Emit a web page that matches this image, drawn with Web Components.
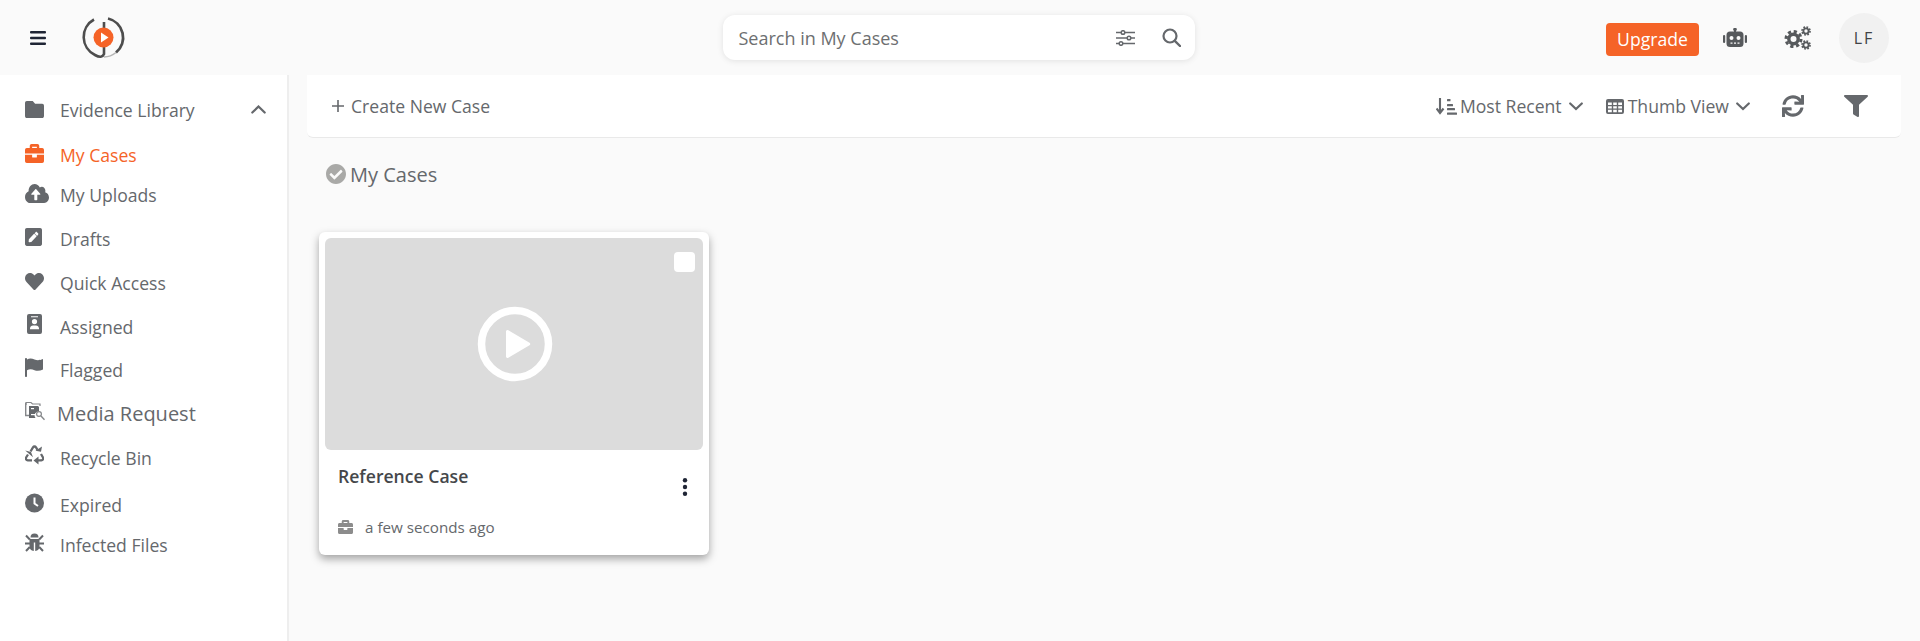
<!DOCTYPE html>
<html lang="en">
<head>
<meta charset="utf-8">
<title>My Cases</title>
<style>
  html, body { margin: 0; height: 100%; overflow: hidden; background: #fafafa; }
  body { font-family: "Open Sans", "Liberation Sans", sans-serif; font-size: 17.6px; color: #65686c; }
</style>
</head>
<body>
<app-shell>
  <top-bar slot="top"></top-bar>
  <side-nav slot="side">
    <nav-item icon="folder" w="19" h="17" step="45" top="1" chevron>Evidence Library</nav-item>
    <nav-item icon="briefcase" w="19" h="19" step="40" active>My Cases</nav-item>
    <nav-item icon="upload" w="24" h="19" step="44">My Uploads</nav-item>
    <nav-item icon="edit" w="17" h="18" step="44">Drafts</nav-item>
    <nav-item icon="heart" w="19" h="17" step="44">Quick Access</nav-item>
    <nav-item icon="contact" w="19" h="20" step="43" top="-2">Assigned</nav-item>
    <nav-item icon="flag" w="18" h="19" step="44" top="-1">Flagged</nav-item>
    <nav-item icon="media" w="20" h="20" step="44" top="-2" big>Media Request</nav-item>
    <nav-item icon="recycle" w="19" h="20" step="47" top="-2">Recycle Bin</nav-item>
    <nav-item icon="clock" w="19" h="20" step="40" top="-1">Expired</nav-item>
    <nav-item icon="bug" w="19" h="19" step="40" top="-1">Infected Files</nav-item>
  </side-nav>
  <case-toolbar></case-toolbar>
  <section-title>My Cases</section-title>
  <case-card name="Reference Case" time="a few seconds ago"></case-card>
</app-shell>

<script>
const ICONS = {
  bars: ['0 0 16 14', '<rect y="0" width="16" height="2.4" rx="1"/><rect y="5.8" width="16" height="2.4" rx="1"/><rect y="11.6" width="16" height="2.4" rx="1"/>'],
  folder: ['0 64 512 384', '<path d="M464 128H272l-64-64H48C21.49 64 0 85.49 0 112v288c0 26.51 21.49 48 48 48h416c26.51 0 48-21.49 48-48V176c0-26.51-21.49-48-48-48z"/>'],
  briefcase: ['0 32 512 448', '<path d="M320 336c0 8.84-7.16 16-16 16h-96c-8.84 0-16-7.16-16-16v-48H0v144c0 25.6 22.4 48 48 48h416c25.6 0 48-22.4 48-48V288H320v48zm144-208h-80V80c0-25.6-22.4-48-48-48H176c-25.6 0-48 22.4-48 48v48H48c-25.6 0-48 22.4-48 48v80h512v-80c0-25.6-22.4-48-48-48zm-144 0H192V96h128v32z"/>'],
  upload: ['0 32 640 448', '<path d="M537.6 226.6c4.1-10.7 6.4-22.4 6.4-34.6 0-53-43-96-96-96-19.7 0-38.1 6-53.3 16.2C367 64.2 315.3 32 256 32c-88.4 0-160 71.6-160 160 0 2.7.1 5.4.2 8.1C40.2 219.8 0 273.2 0 336c0 79.5 64.5 144 144 144h368c70.7 0 128-57.3 128-128 0-61.9-44-113.6-102.4-125.4zM393.4 288H328v112c0 8.8-7.2 16-16 16h-48c-8.8 0-16-7.2-16-16V288h-65.4c-14.3 0-21.4-17.2-11.3-27.3l105.4-105.4c6.2-6.2 16.4-6.2 22.6 0l105.4 105.4c10.1 10.1 2.9 27.3-11.3 27.3z"/>'],
  edit: ['0 32 448 448', '<path d="M400 480H48c-26.5 0-48-21.5-48-48V80c0-26.5 21.5-48 48-48h352c26.5 0 48 21.5 48 48v352c0 26.5-21.5 48-48 48zM238.1 177.9L102.4 313.6l-6.3 57.1c-.8 7.6 5.6 14.1 13.3 13.3l57.1-6.3L302.2 242c2.3-2.3 2.3-6.1 0-8.5L246.7 178c-2.5-2.4-6.3-2.4-8.6-.1zM345 165.1L314.9 135c-9.4-9.4-24.6-9.4-33.9 0l-23.1 23.1c-2.3 2.3-2.3 6.1 0 8.5l55.5 55.5c2.3 2.3 6.1 2.3 8.5 0L345 199c9.3-9.3 9.3-24.5 0-33.9z"/>'],
  heart: ['0 32 512 448', '<path d="M462.3 62.6C407.5 15.9 326 24.3 275.7 76.2L256 96.5l-19.7-20.3C186.1 24.3 104.5 15.9 49.7 62.6c-62.8 53.6-66.1 149.8-9.9 207.9l193.5 199.8c12.5 12.9 32.8 12.9 45.3 0l193.5-199.8c56.3-58.1 53-154.3-9.8-207.9z"/>'],
  contact: ['0 0 19 20', '<path fill-rule="evenodd" d="M4 0h11a2 2 0 0 1 2 2v16a2 2 0 0 1-2 2H4a2 2 0 0 1-2-2V2a2 2 0 0 1 2-2zm5.500 5a2.600 2.600 0 1 0 0 5.200a2.600 2.600 0 0 0 0-5.200zM5 14.600c0-1.800 1.500-3 3-3h3c1.500 0 3 1.200 3 3v.7H5zM6 2.200v1h7v-1z"/>'],
  flag: ['0 0 18 19', '<rect x="0" y="0" width="2" height="19" rx=".8"/><path d="M2 1.500c2.500-1.400 5-1 7.500 0s5 1 8.500-.5v10.500c-3 1.500-6 1.700-8.500.7s-5-1.200-7.500 0z"/>'],
  media: ['0 0 20 20', '<path d="M1 4V1.500h5l1.500 1.500H15v2" fill="none" stroke="#85878a" stroke-width="1.200"/><path d="M.7 2v12.500H4" fill="none" stroke="#85878a" stroke-width="1.400"/><path d="M4 5h9l1 1v4.500a4 4 0 0 0-3.500 6.500H4z"/><rect x="6" y="7" width="3" height="1.200" fill="#fff"/><rect x="6" y="13" width="4" height="1.200" fill="#fff"/><circle cx="14" cy="13" r="2.400" fill="none" stroke="#85878a" stroke-width="1.200"/><path d="M16 15l3.500 3.800" stroke="#85878a" stroke-width="1.400"/>'],
  recycle: ['0 0 19 20', '<g fill="none" stroke="currentColor" stroke-width="2.300"><path d="M5.500 6.500L8 2.300c.7-1.100 2.300-1.100 3 0l1.500 2.500"/><path d="M16 9l2 3.500c.7 1.300-.2 2.800-1.600 2.800H13"/><path d="M7 15.300H2.700c-1.400 0-2.300-1.500-1.600-2.800L3 9.500"/></g><path d="M10.500 5.800l5.500.9 1-5.200zM.2 5.500l5.800 1.600L8 12.200zM13.500 11.500v8l-5-4z"/>'],
  clock: ['0 0 19 20', '<circle cx="9.500" cy="10" r="9.500"/><path d="M9.500 4.500V10.500L13 13" fill="none" stroke="#fff" stroke-width="2"/>'],
  bug: ['0 0 19 19', '<path d="M5.500 4.500a4 4 0 0 1 8 0z"/><path d="M4.500 6h10v7a5 5 0 0 1-4.300 5V9.500H8.800V18a5 5 0 0 1-4.300-5z"/><path d="M1 2.500l3.800 4M18 2.500l-3.800 4M0 10.500h5M14 10.500h5M1 18l3.800-4M18 18l-3.800-4" stroke="currentColor" stroke-width="2" fill="none"/>'],
  check: ['8 8 496 496', '<path d="M504 256c0 136.967-111.033 248-248 248S8 392.967 8 256 119.033 8 256 8s248 111.033 248 248zM227.314 387.314l184-184c6.248-6.248 6.248-16.379 0-22.627l-22.627-22.627c-6.248-6.249-16.379-6.25-22.628 0L216 308.118l-70.059-70.059c-6.248-6.248-16.379-6.248-22.628 0l-22.627 22.627c-6.248 6.248-6.248 16.379 0 22.627l104 104c6.249 6.249 16.379 6.249 22.628.001z"/>'],
  sliders: ['0 0 19 16', '<g fill="none" stroke="currentColor" stroke-width="1.500"><path d="M0 2.500h5M9 2.500h10M0 8h11M15 8h4M0 13.500h3M7 13.500h12"/><circle cx="7" cy="2.500" r="1.800"/><circle cx="13" cy="8" r="1.800"/><circle cx="5" cy="13.500" r="1.800"/></g>'],
  search: ['0 0 19 19', '<circle cx="8" cy="8" r="6.500" fill="none" stroke="currentColor" stroke-width="2.200"/><path d="M12.800 12.800L18 18" stroke="currentColor" stroke-width="2.400" stroke-linecap="round"/>'],
  robot: ['0 0 24 19', '<rect x="11" y="0" width="2" height="4"/><circle cx="12" cy="1.500" r="1.800"/><path fill-rule="evenodd" d="M7 3.500h10a3.500 3.500 0 0 1 3.500 3.500v8.500a3.500 3.500 0 0 1-3.500 3.500H7a3.500 3.500 0 0 1-3.500-3.500V7A3.500 3.500 0 0 1 7 3.500zM8.500 8a2 2 0 1 0 0 4 2 2 0 0 0 0-4zm7 0a2 2 0 1 0 0 4 2 2 0 0 0 0-4zM7.500 14.500v1.200h2v-1.200zm3.500 0v1.200h2v-1.200zm3.500 0v1.200h2v-1.200z"/><rect x="0" y="7" width="2.200" height="8" rx="1.100"/><rect x="21.800" y="7" width="2.200" height="8" rx="1.100"/>'],
  cogs: ['0 0 27 24', '<g fill="none" stroke="currentColor"><circle cx="9.500" cy="13" r="4.700" stroke-width="3.400"/><circle cx="9.500" cy="13" r="7.500" stroke-width="3" stroke-dasharray="3.200 2.690"/><circle cx="22" cy="5" r="2.600" stroke-width="1.800"/><circle cx="22" cy="5" r="4" stroke-width="1.700" stroke-dasharray="1.700 1.440"/><circle cx="22" cy="19" r="2.600" stroke-width="1.800"/><circle cx="22" cy="19" r="4" stroke-width="1.700" stroke-dasharray="1.700 1.440"/></g>'],
  sort: ['0 0 21 17', '<path d="M4 0v14M.5 10.500L4 15l3.500-4.500" fill="none" stroke="currentColor" stroke-width="2.100"/><rect x="11" y="1" width="3.500" height="2.200" rx=".5"/><rect x="11" y="6" width="6" height="2.200" rx=".5"/><rect x="11" y="10" width="8" height="2.200" rx=".5"/><rect x="11" y="14.500" width="10" height="2.200" rx=".5"/>'],
  table: ['0 0 18 15', '<path fill-rule="evenodd" d="M2 0h14a2 2 0 0 1 2 2v11a2 2 0 0 1-2 2H2a2 2 0 0 1-2-2V2a2 2 0 0 1 2-2zm0 3.500v2.500h3.800V3.500zm5.200 0v2.500h3.600V3.500zm5 0v2.500H16V3.500zM2 7.200v2.400h3.800V7.200zm5.200 0v2.400h3.600V7.200zm5 0v2.400H16V7.200zM2 10.800v2.400h3.800v-2.400zm5.200 0v2.400h3.600v-2.400zm5 0v2.400H16v-2.400z"/>'],
  sync: ['0 0 512 512', '<path d="M440.65 12.57l4 82.77A247.16 247.16 0 0 0 255.83 8C134.73 8 33.91 94.92 12.29 209.82A12 12 0 0 0 24.09 224h49.05a12 12 0 0 0 11.67-9.26 175.91 175.91 0 0 1 317-56.94l-101.46-4.86a12 12 0 0 0-12.57 12v47.41a12 12 0 0 0 12 12H500a12 12 0 0 0 12-12V12a12 12 0 0 0-12-12h-47.37a12 12 0 0 0-11.98 12.57zM255.83 432a175.61 175.61 0 0 1-146-77.8l101.8 4.87a12 12 0 0 0 12.57-12v-47.4a12 12 0 0 0-12-12H12a12 12 0 0 0-12 12V500a12 12 0 0 0 12 12h47.35a12 12 0 0 0 12-12.6l-4.15-82.57A247.17 247.17 0 0 0 255.83 504c121.11 0 221.93-86.92 243.55-201.82a12 12 0 0 0-11.8-14.18h-49.05a12 12 0 0 0-11.67 9.26A175.86 175.86 0 0 1 255.83 432z"/>'],
  filter: ['0 0 512 512', '<path d="M487.976 0H24.028C2.71 0-8.047 25.866 7.058 40.971L192 225.941V432c0 7.831 3.821 15.17 10.237 19.662l80 55.98C298.02 518.69 320 507.493 320 487.98V225.941l184.947-184.97C520.021 25.896 509.338 0 487.976 0z"/>'],
  chevron: ['0 0 14 9', '<path d="M1.200 1.500L7 7l5.800-5.500" fill="none" stroke="currentColor" stroke-width="2.200" stroke-linecap="round"/>'],
  chevronUp: ['0 0 15 9', '<path d="M1.300 7.500L7.500 1.500l6.200 6" fill="none" stroke="currentColor" stroke-width="2.200" stroke-linecap="round"/>'],
  plus: ['0 0 12 12', '<path d="M6 0v12M0 6h12" stroke="currentColor" stroke-width="1.600" fill="none"/>'],
  kebab: ['0 0 6 18', '<circle cx="3" cy="2.200" r="2.200"/><circle cx="3" cy="9" r="2.200"/><circle cx="3" cy="15.800" r="2.200"/>']
}

customElements.define('x-icon',
  class extends HTMLElement {
    connectedCallback() {
      const [viewBox, body] = ICONS[this.getAttribute('name')]
      const w = this.getAttribute('w')
      const h = this.getAttribute('h')
      this.attachShadow({ mode: 'open' }).innerHTML = `
        <style>
          :host { display: inline-flex; flex: none; width: ${w}px; height: ${h}px; }
          svg { display: block; width: 100%; height: 100%; fill: currentColor; }
        </style>
        <svg viewBox="${viewBox}" preserveAspectRatio="none">${body}</svg>
      `
    }
  }
)

const shellTemplate = document.createElement('template')
shellTemplate.innerHTML = `
  <style>
    :host {
      display: grid;
      grid-template-columns: 289px 1fr;
      grid-template-rows: 75px 1fr;
      height: 641px;
      width: 1920px;
    }
    .top { grid-column: 1 / -1; }
    main { padding: 0 19px 0 18px; display: flex; flex-direction: column; }
  </style>
  <div class="top"><slot name="top"></slot></div>
  <slot name="side"></slot>
  <main><slot></slot></main>
`
customElements.define('app-shell',
  class extends HTMLElement {
    constructor() {
      super()
      this.attachShadow({ mode: 'open' })
      this.shadowRoot.appendChild(shellTemplate.content.cloneNode(true))
    }
  }
)

const searchTemplate = document.createElement('template')
searchTemplate.innerHTML = `
  <style>
    :host {
      display: flex;
      align-items: center;
      box-sizing: border-box;
      width: 472px;
      height: 45px;
      margin-left: -1px;
      padding: 0 14px 0 16px;
      background: #fff;
      border-radius: 12px;
      box-shadow: 0 1px 6px rgba(0, 0, 0, .1);
      color: #6d6f71;
      font-size: 18px;
    }
    .text { flex: 1; }
    .icons { display: flex; align-items: center; gap: 27px; color: #65686c; }
  </style>
  <div class="text">Search in My Cases</div>
  <div class="icons">
    <x-icon name="sliders" w="19" h="16"></x-icon>
    <x-icon name="search" w="19" h="19"></x-icon>
  </div>
`
customElements.define('search-box',
  class extends HTMLElement {
    constructor() {
      super()
      this.attachShadow({ mode: 'open' })
      this.shadowRoot.appendChild(searchTemplate.content.cloneNode(true))
    }
  }
)

const topTemplate = document.createElement('template')
topTemplate.innerHTML = `
  <style>
    :host {
      display: grid;
      grid-template-columns: 1fr 472px 1fr;
      align-items: center;
      height: 75px;
      box-sizing: border-box;
      padding: 0 31px 0 30px;
      background: #fafafa;
    }
    .left, .right { display: flex; align-items: center; }
    .left { gap: 36px; color: #1f2535; }
    .logo { display: block; width: 44px; height: 44px; }
    .right { justify-content: flex-end; color: #56595c; }
    .upgrade {
      box-sizing: border-box;
      width: 93px;
      height: 33px;
      margin-top: 4px;
      line-height: 33px;
      text-align: center;
      background: #f56327;
      color: #fff;
      border-radius: 4px;
    }
    .robot { margin-left: 24px; }
    .cogs { margin-left: 37px; }
    .avatar {
      margin-left: 28px;
      width: 50px;
      height: 50px;
      border-radius: 50%;
      background: #f1f1f1;
      color: #404346;
      display: flex;
      align-items: center;
      justify-content: center;
      font-size: 16px;
      letter-spacing: 2px;
    }
  </style>
  <div class="left">
    <x-icon name="bars" w="16" h="14"></x-icon>
    <svg class="logo" viewBox="0 0 44 44" fill="none">
      <path d="M12 3.500A20 20 0 0 0 13 39Q20 43 22 38V6" stroke="#4d4d4d" stroke-width="2.600"/>
      <path d="M26 2.500A19.500 19.500 0 0 1 34 36.500" stroke="#4d4d4d" stroke-width="2.800"/>
      <path d="M34 36.500A19.500 19.500 0 0 1 22 41" stroke="#b5b5b5" stroke-width="1.500"/>
      <circle cx="21.500" cy="21.500" r="10" fill="#f56327"/>
      <path d="M19 16.500L26.500 21.500 19 26.500z" fill="#fff"/>
    </svg>
  </div>
  <search-box></search-box>
  <div class="right">
    <div class="upgrade">Upgrade</div>
    <x-icon class="robot" name="robot" w="24" h="19"></x-icon>
    <x-icon class="cogs" name="cogs" w="27" h="24"></x-icon>
    <div class="avatar">LF</div>
  </div>
`
customElements.define('top-bar',
  class extends HTMLElement {
    constructor() {
      super()
      this.attachShadow({ mode: 'open' })
      this.shadowRoot.appendChild(topTemplate.content.cloneNode(true))
    }
  }
)

const sideTemplate = document.createElement('template')
sideTemplate.innerHTML = `
  <style>
    :host {
      display: block;
      box-sizing: border-box;
      width: 289px;
      height: 566px;
      padding: 24px 0 0 25px;
      background: #fff;
      border-right: 2px solid #eeeeee;
    }
  </style>
  <slot></slot>
`
customElements.define('side-nav',
  class extends HTMLElement {
    constructor() {
      super()
      this.attachShadow({ mode: 'open' })
      this.shadowRoot.appendChild(sideTemplate.content.cloneNode(true))
    }
  }
)

customElements.define('nav-item',
  class extends HTMLElement {
    connectedCallback() {
      const icon = this.getAttribute('icon')
      const w = this.getAttribute('w')
      const h = this.getAttribute('h')
      const top = this.getAttribute('top') || 0
      const step = this.getAttribute('step')
      const big = this.hasAttribute('big')
      const active = this.hasAttribute('active')
      const chevron = this.hasAttribute('chevron')
      this.attachShadow({ mode: 'open' }).innerHTML = `
        <style>
          :host {
            display: flex;
            align-items: flex-start;
            height: ${step}px;
            color: ${active ? '#f56327' : '#65686c'};
            line-height: 22px;
          }
          .icon { width: ${big ? 32 : 35}px; flex: none; margin-top: ${top}px; }
          .label { flex: 1; font-size: ${big ? 20 : 17.6}px; }
          .chevron { margin: 6px 21px 0 0; }
        </style>
        <div class="icon"><x-icon name="${icon}" w="${w}" h="${h}"></x-icon></div>
        <div class="label"><slot></slot></div>
        ${chevron ? '<x-icon class="chevron" name="chevronUp" w="15" h="9"></x-icon>' : ''}
      `
    }
  }
)

const toolbarTemplate = document.createElement('template')
toolbarTemplate.innerHTML = `
  <style>
    :host {
      display: flex;
      align-items: center;
      box-sizing: border-box;
      height: 63px;
      padding: 0 33px 0 25px;
      background: #fff;
      border-bottom: 1px solid #e9e9e9;
      border-radius: 0 0 6px 6px;
      color: #65686c;
    }
    .create { display: flex; align-items: center; gap: 7px; flex: 1; }
    .drop { display: flex; align-items: center; }
    .drop .txt { margin: 0 7px 0 4px; }
    .sort { margin-right: 23px; }
    .sort .txt { margin-left: 3px; }
    .thumb { margin-right: 32px; }
    .filter { margin-left: 40px; }
  </style>
  <div class="create"><x-icon name="plus" w="12" h="12"></x-icon><span>Create New Case</span></div>
  <div class="drop sort">
    <x-icon name="sort" w="21" h="17"></x-icon><span class="txt">Most Recent</span><x-icon name="chevron" w="14" h="9"></x-icon>
  </div>
  <div class="drop thumb">
    <x-icon name="table" w="18" h="15"></x-icon><span class="txt">Thumb View</span><x-icon name="chevron" w="14" h="9"></x-icon>
  </div>
  <x-icon name="sync" w="22" h="22"></x-icon>
  <x-icon class="filter" name="filter" w="24" h="22"></x-icon>
`
customElements.define('case-toolbar',
  class extends HTMLElement {
    constructor() {
      super()
      this.attachShadow({ mode: 'open' })
      this.shadowRoot.appendChild(toolbarTemplate.content.cloneNode(true))
    }
  }
)

const titleTemplate = document.createElement('template')
titleTemplate.innerHTML = `
  <style>
    :host {
      display: flex;
      align-items: center;
      gap: 4px;
      height: 26px;
      margin: 23px 0 45px 19px;
      font-size: 20px;
      color: #65686c;
    }
    x-icon { color: #a9a9a7; }
  </style>
  <x-icon name="check" w="20" h="20"></x-icon>
  <span><slot></slot></span>
`
customElements.define('section-title',
  class extends HTMLElement {
    constructor() {
      super()
      this.attachShadow({ mode: 'open' })
      this.shadowRoot.appendChild(titleTemplate.content.cloneNode(true))
    }
  }
)

customElements.define('case-card',
  class extends HTMLElement {
    connectedCallback() {
      const name = this.getAttribute('name')
      const time = this.getAttribute('time')
      this.attachShadow({ mode: 'open' }).innerHTML = `
        <style>
          :host {
            display: block;
            box-sizing: border-box;
            width: 390px;
            height: 323px;
            margin-left: 12px;
            padding: 6px;
            background: #fff;
            border-radius: 6px;
            box-shadow: 0 4px 8px rgba(0, 0, 0, .35);
          }
          .thumb {
            position: relative;
            display: flex;
            align-items: center;
            justify-content: center;
            height: 212px;
            background: #dcdcdc;
            border-radius: 6px;
          }
          .tick {
            position: absolute;
            top: 14px;
            right: 8px;
            width: 21px;
            height: 20px;
            background: #fff;
            border-radius: 4px;
          }
          .play { display: block; width: 76px; height: 76px; margin-left: 2px; }
          .body { display: flex; padding: 15px 15px 0 13px; }
          .name { flex: 1; font-weight: 600; color: #45474a; line-height: 22px; font-size: 17.6px; }
          .more { margin-top: 13px; color: #1f2535; }
          .meta { display: flex; align-items: center; gap: 12px; padding: 21px 0 0 13px; font-size: 15.2px; color: #65686c; }
          .meta x-icon { color: #8c8c8c; }
        </style>
        <div class="thumb">
          <div class="tick"></div>
          <svg class="play" viewBox="0 0 76 76">
            <circle cx="38" cy="38" r="33.500" fill="none" stroke="#fff" stroke-width="7.500"/>
            <path d="M29 25.500a1.500 1.500 0 0 1 2.300-1.300L52.500 36.700a1.500 1.500 0 0 1 0 2.600L31.300 51.800a1.500 1.500 0 0 1-2.300-1.300z" fill="#fff"/>
          </svg>
        </div>
        <div class="body">
          <div class="name">${name}</div>
          <x-icon class="more" name="kebab" w="6" h="18"></x-icon>
        </div>
        <div class="meta">
          <x-icon name="briefcase" w="15" h="14"></x-icon>
          <span>${time}</span>
        </div>
      `
    }
  }
)
</script>
</body>
</html>
